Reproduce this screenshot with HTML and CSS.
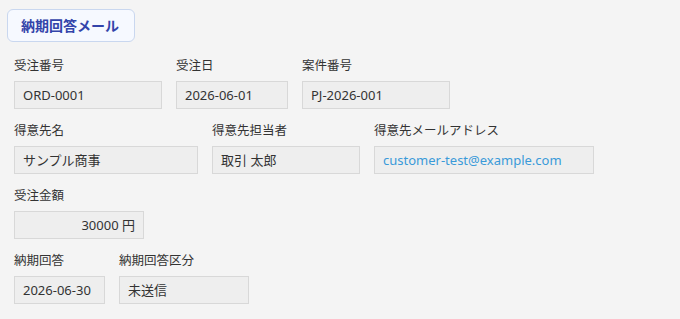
FILE: index.html
```html
<!DOCTYPE html>
<html lang="ja">
<head>
<meta charset="UTF-8" />
<meta name="viewport" content="width=device-width, initial-scale=1" />
<title>納期回答メール</title>
<link rel="stylesheet" href="styles.css">
</head>
<body>

<div class="titulo">納期回答メール</div>

<div class="form">
  <div class="linha">
    <div class="campo">
      <div class="rotulo">受注番号</div>
      <div class="valor w148">ORD-0001</div>
    </div>
    <div class="campo">
      <div class="rotulo">受注日</div>
      <div class="valor w112">2026-06-01</div>
    </div>
    <div class="campo">
      <div class="rotulo">案件番号</div>
      <div class="valor w148">PJ-2026-001</div>
    </div>
  </div>

  <div class="linha">
    <div class="campo">
      <div class="rotulo">得意先名</div>
      <div class="valor w184">サンプル商事</div>
    </div>
    <div class="campo">
      <div class="rotulo">得意先担当者</div>
      <div class="valor w148">取引 太郎</div>
    </div>
    <div class="campo">
      <div class="rotulo">得意先メールアドレス</div>
      <div class="valor w220"><a href="mailto:customer-test@example.com">customer-test@example.com</a></div>
    </div>
  </div>

  <div class="linha">
    <div class="campo">
      <div class="rotulo">受注金額</div>
      <div class="valor w130 direita">30000 円</div>
    </div>
  </div>

  <div class="linha">
    <div class="campo">
      <div class="rotulo">納期回答</div>
      <div class="valor w91">2026-06-30</div>
    </div>
    <div class="campo">
      <div class="rotulo">納期回答区分</div>
      <div class="valor w130">未送信</div>
    </div>
  </div>
</div>

</body>
</html>
```

FILE: styles.css
```css
body {
  font-family: "Noto Sans", "Noto Sans CJK JP", sans-serif;
  background: #f4f4f4;
  margin: 0;
  padding: 9px 7px;
  color: #333;
}
/* Titulo */
.titulo {
  display: inline-block;
  box-sizing: border-box;
  height: 33px;
  padding: 0 15px 0 13px;
  line-height: 31px;
  font-size: 14px;
  font-weight: bold;
  color: #3344aa;
  background: #f6f9ff;
  border: 1px solid #c9d7ef;
  border-radius: 6px;
}
/* Formulario */
.form {
  padding: 15px 7px 0;
}
.linha {
  display: flex;
  gap: 14px;
  margin-bottom: 13px;
}
.rotulo {
  font-size: 12.5px;
  line-height: 18px;
  height: 18px;
  margin-bottom: 6px;
  white-space: nowrap;
}
.valor {
  box-sizing: border-box;
  height: 28px;
  padding: 0 8px;
  line-height: 26px;
  font-size: 13px;
  background: #eeeeee;
  border: 1px solid #d8d8d8;
  white-space: nowrap;
}
.valor a {
  color: #3a9ad9;
  text-decoration: none;
}
.direita {
  text-align: right;
}
.w91 { width: 91px; }
.w112 { width: 112px; }
.w130 { width: 130px; }
.w148 { width: 148px; }
.w184 { width: 184px; }
.w220 { width: 220px; }
```
